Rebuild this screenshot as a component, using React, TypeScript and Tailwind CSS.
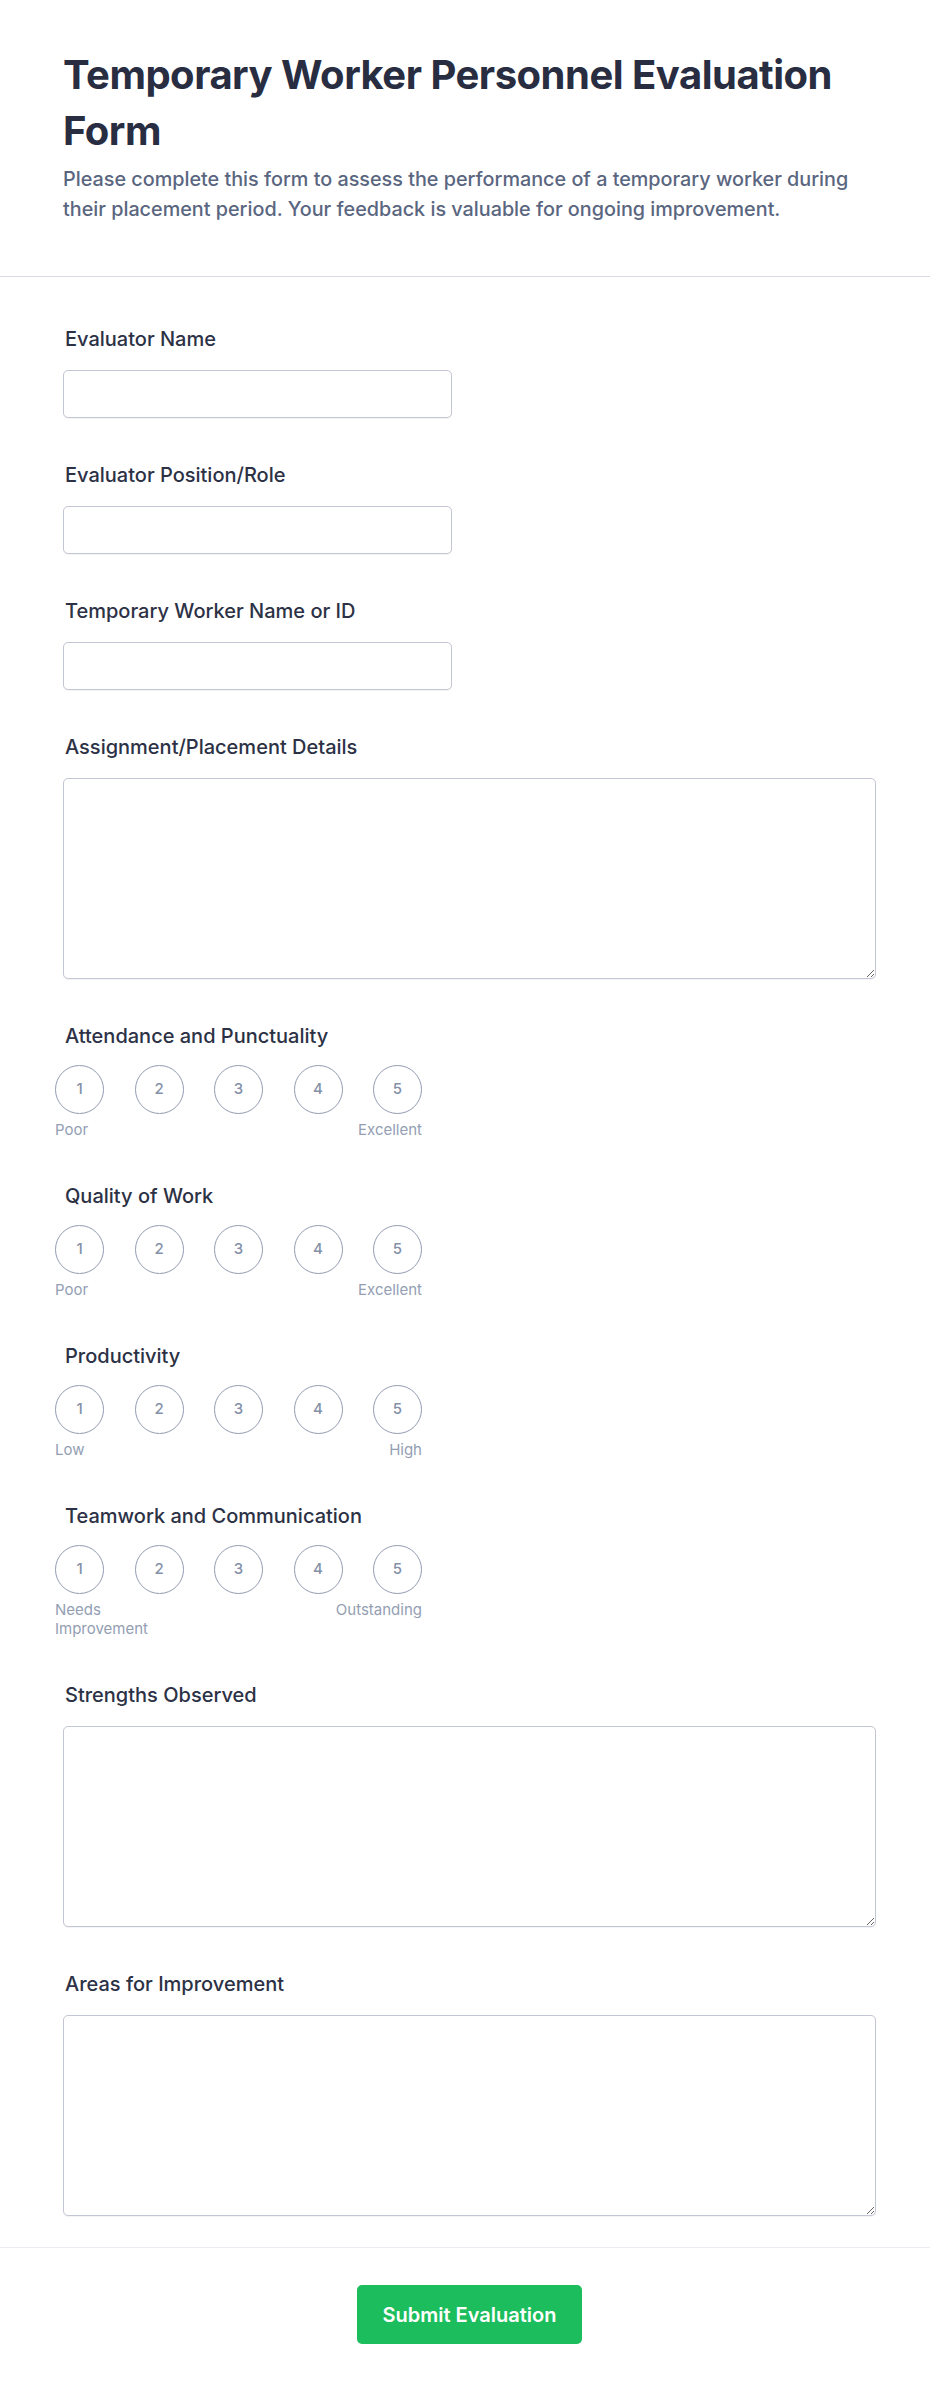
import React from "react";

const scales = [
  { label: "Attendance and Punctuality", low: "Poor", high: "Excellent" },
  { label: "Quality of Work", low: "Poor", high: "Excellent" },
  { label: "Productivity", low: "Low", high: "High" },
  { label: "Teamwork and Communication", low: "Needs Improvement", high: "Outstanding" },
];

function FieldLabel({ children }: { children: React.ReactNode }) {
  return <label className="block pl-[2px] text-[20px] leading-[28px] font-medium text-[#2c3145] mb-[17px]">{children}</label>;
}

function TextInput({ label }: { label: string }) {
  return (
    <div className="mb-[43px]">
      <FieldLabel>{label}</FieldLabel>
      <input
        type="text"
        className="block w-[389px] h-[48px] rounded-[5px] border border-[#c3c6d4] bg-white px-3 shadow-[0_1px_1px_rgba(0,0,0,0.05)] outline-none"
      />
    </div>
  );
}

function TextArea({ label, last }: { label: string; last?: boolean }) {
  return (
    <div className={last ? "" : "mb-[43px]"}>
      <FieldLabel>{label}</FieldLabel>
      <textarea className="block w-full h-[201px] rounded-[5px] border border-[#c3c6d4] bg-white p-3 shadow-[0_1px_1px_rgba(0,0,0,0.05)] outline-none" />
    </div>
  );
}

function RatingScale({ label, low, high }: { label: string; low: string; high: string }) {
  return (
    <div className="mb-[43px]">
      <div className="pl-[2px] text-[20px] leading-[28px] font-medium text-[#2c3145] mb-[15px]">{label}</div>
      <div className="-ml-[8px] w-[367px]">
        <div className="flex justify-between">
          {[1, 2, 3, 4, 5].map((n) => (
            <button
              key={n}
              type="button"
              className="w-[49px] h-[49px] rounded-full border-[1.5px] border-[#929bb1] bg-white flex items-center justify-center text-[15px] font-medium text-[#8390a8]"
            >
              {n}
            </button>
          ))}
        </div>
        <div className="flex justify-between mt-[6px] text-[15px] leading-[19px] text-[#939eb3]">
          <span className="w-[110px]">{low}</span>
          <span className="w-[110px] text-right">{high}</span>
        </div>
      </div>
    </div>
  );
}

export default function App() {
  return (
    <div className="min-h-screen bg-white font-['Inter','Noto_Sans',sans-serif]">
      {/* Header */}
      <div className="pl-[63px] pr-[54px] pt-[47px] pb-[52px] border-b border-[#d9dbe4]">
        <h1 className="text-[40px] leading-[56px] font-bold text-[#282d41] tracking-[-0.5px]">
          Temporary Worker Personnel Evaluation Form
        </h1>
        <p className="mt-[5px] text-[19.8px] leading-[30px] font-medium text-[#5a6680] max-w-[800px]">
          Please complete this form to assess the performance of a temporary worker during their placement period. Your feedback is valuable for ongoing improvement.
        </p>
      </div>

      {/* Form body */}
      <form className="pl-[63px] pr-[54px] pt-[48px] pb-[31px] border-b border-[#ebecf1]">
        <TextInput label="Evaluator Name" />
        <TextInput label="Evaluator Position/Role" />
        <TextInput label="Temporary Worker Name or ID" />
        <TextArea label="Assignment/Placement Details" />
        {scales.map((s) => (
          <RatingScale key={s.label} {...s} />
        ))}
        <TextArea label="Strengths Observed" />
        <TextArea label="Areas for Improvement" last />
      </form>

      {/* Footer */}
      <div className="pl-[63px] pr-[54px] pt-[37px] pb-[49px] flex justify-center">
        <button
          type="button"
          className="h-[59px] px-[26px] rounded-[5px] bg-[#1bbd5c] text-white text-[20px] font-semibold"
        >
          Submit Evaluation
        </button>
      </div>
    </div>
  );
}
